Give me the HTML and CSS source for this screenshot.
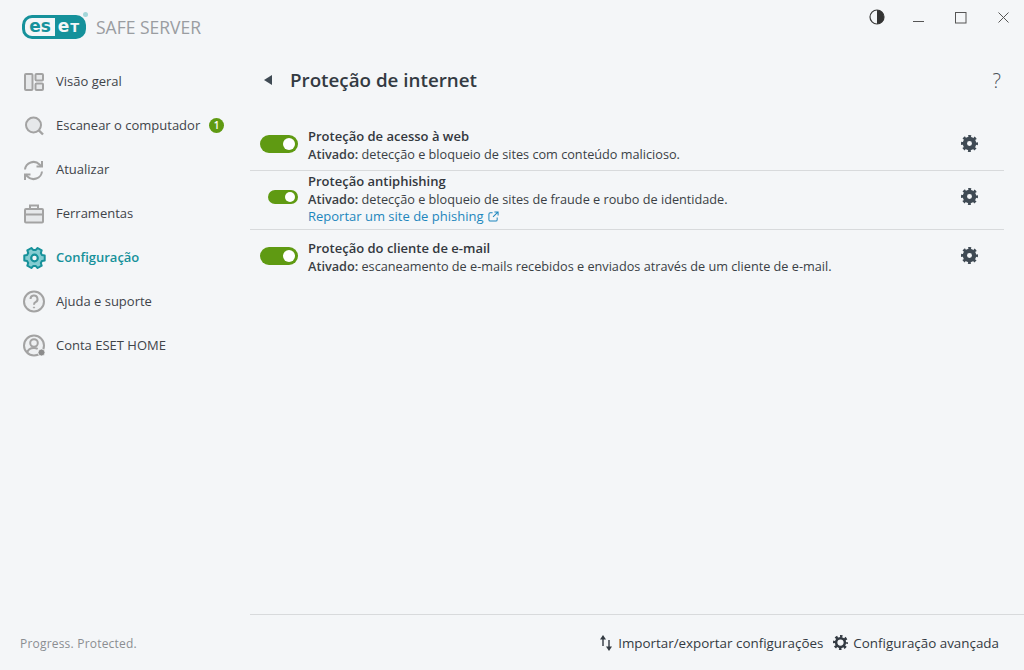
FILE: index.html

```html
<!DOCTYPE html>
<html lang="pt-BR">
<head>
<meta charset="UTF-8">
<title>ESET Safe Server</title>
<link rel="stylesheet" href="styles.css">
</head>
<body>
<svg class="defs" width="0" height="0">
  <symbol id="cog" viewBox="0 0 24 24">
    <circle cx="12" cy="12" r="6.5" fill="none" stroke="#3f4a54" stroke-width="6"/>
    <circle cx="12" cy="12" r="10" fill="none" stroke="#3f4a54" stroke-width="4" stroke-dasharray="3.93 3.92" stroke-dashoffset="1.96"/>
  </symbol>
  <symbol id="cog-line" viewBox="0 0 24 24">
    <circle cx="12" cy="12" r="7" fill="none" stroke="#333a42" stroke-width="4"/>
    <circle cx="12" cy="12" r="10" fill="none" stroke="#333a42" stroke-width="4" stroke-dasharray="3.93 3.92" stroke-dashoffset="1.96"/>
  </symbol>
</svg>
<div class="app">
  <aside class="sidebar">
    <div class="brand">
      <div class="logo"><span class="logo-es">es</span><span class="logo-et">e<small>T</small></span><i class="logo-reg"></i></div>
      <span class="product">SAFE SERVER</span>
    </div>
    <nav class="nav">
      <a class="nav-item">
        <svg class="nav-icon" viewBox="0 0 24 24" fill="#e6e8ea" stroke="#a3a3a3" stroke-width="2"><rect x="3" y="4" width="7.5" height="16" rx="1"/><rect x="13.5" y="4" width="7.5" height="6.5" rx="1"/><rect x="13.5" y="13.5" width="7.5" height="6.5" rx="1"/></svg>
        <span>Visão geral</span>
      </a>
      <a class="nav-item">
        <svg class="nav-icon" viewBox="0 0 24 24" fill="#e6e8ea" stroke="#a3a3a3" stroke-width="2"><circle cx="11.5" cy="11" r="7.5"/><path d="M16.8 16.3l4.200 4.200" stroke-width="2.4"/></svg>
        <span>Escanear o computador</span>
        <b class="badge">1</b>
      </a>
      <a class="nav-item">
        <svg class="nav-icon" viewBox="0 0 24 24" fill="none" stroke="#a3a3a3" stroke-width="2"><path d="M3 11.5A8.5 8.5 0 0 1 17.5 6.5L19.5 8.5"/><path d="M20 3V8.5H14.5"/><path d="M20 13.5A8.5 8.5 0 0 1 5.5 18.5L3.5 16.5"/><path d="M3 22V16.5H8.5"/></svg>
        <span>Atualizar</span>
      </a>
      <a class="nav-item">
        <svg class="nav-icon" viewBox="0 0 24 24" fill="#e6e8ea" stroke="#a3a3a3" stroke-width="2"><rect x="3" y="7" width="18" height="13.5" rx="1"/><path d="M8 7V3.5h8V7" fill="none"/><path d="M3 12.5h18"/></svg>
        <span>Ferramentas</span>
      </a>
      <a class="nav-item active">
        <svg class="nav-icon" viewBox="0 0 24 24" fill="#84ccd1" stroke="#16919a" stroke-width="2"><path d="M19.900 9L22.700 9.600V14.400L19.900 15L18.800 16.900L19.700 19.700L15.600 22L13.600 19.900H11.400L9.400 22L5.300 19.700L6.200 16.900L5.100 15L2.300 14.400V9.600L5.100 9L6.200 7.100L5.300 4.300L9.400 2L11.400 4.100H13.600L15.600 2L19.700 4.300L18.800 7.100z" stroke-linejoin="round"/><circle cx="12.5" cy="12" r="3.3" fill="#f4f6f8" stroke-width="2.2"/></svg>
        <span>Configuração</span>
      </a>
      <a class="nav-item">
        <svg class="nav-icon" viewBox="0 0 24 24" fill="#eef0f2" stroke="#a3a3a3" stroke-width="2"><circle cx="12" cy="11.5" r="10"/><path d="M8.5 9A3.5 3.5 0 1 1 13.5 12.200C12.500 12.700 12 13.400 12 14.700" fill="none"/><circle cx="12" cy="17.5" r=".6" fill="#a3a3a3" stroke-width="1"/></svg>
        <span>Ajuda e suporte</span>
      </a>
      <a class="nav-item">
        <svg class="nav-icon" viewBox="0 0 24 24" fill="#eef0f2" stroke="#a3a3a3" stroke-width="2"><circle cx="12" cy="11.5" r="10"/><circle cx="12" cy="9" r="3.8"/><path d="M5 19c.8-3.500 3.500-5 7-5 1.500 0 2.700.3 3.700.8" fill="none"/><circle cx="19.5" cy="18.5" r="3.5" fill="#8c8c8c" stroke="#f4f6f8" stroke-width=".8"/></svg>
        <span>Conta ESET HOME</span>
      </a>
    </nav>
    <div class="tagline">Progress. Protected.</div>
  </aside>

  <main class="main">
    <div class="window-bar">
      <svg class="win-icon contrast" viewBox="0 0 16 16"><circle cx="8" cy="8" r="7" fill="none" stroke="#3a3a3a" stroke-width="1.2"/><path d="M8 1a7 7 0 0 1 0 14z" fill="#333"/></svg>
      <svg class="win-icon minimize" viewBox="0 0 12 12"><path d="M0 9.500h11" stroke="#555" stroke-width="1"/></svg>
      <svg class="win-icon maximize" viewBox="0 0 12 12"><rect x=".5" y=".5" width="10.5" height="10.5" fill="none" stroke="#555" stroke-width="1"/></svg>
      <svg class="win-icon close" viewBox="0 0 12 12"><path d="M.5 .5l10 10M10.500 .5L.5 10.500" stroke="#555" stroke-width="1" fill="none"/></svg>
    </div>
    <header class="page-head">
      <span class="back"></span>
      <h1>Proteção de internet</h1>
      <span class="help">?</span>
    </header>
    <section class="rows">
      <div class="row">
        <span class="switch"></span>
        <div class="row-text">
          <div class="row-title">Proteção de acesso à web</div>
          <div class="row-desc"><b>Ativado:</b> detecção e bloqueio de sites com conteúdo malicioso.</div>
        </div>
        <svg class="gear" viewBox="0 0 24 24"><use href="#cog"/></svg>
      </div>
      <div class="row row-tall">
        <span class="switch small"></span>
        <div class="row-text">
          <div class="row-title">Proteção antiphishing</div>
          <div class="row-desc"><b>Ativado:</b> detecção e bloqueio de sites de fraude e roubo de identidade.</div>
          <a class="row-link">Reportar um site de phishing
            <svg class="ext" viewBox="0 0 12 12" fill="none" stroke="#1d86bd" stroke-width="1.1"><path d="M5 2H2.500A1.500 1.500 0 0 0 1 3.500v6A1.500 1.500 0 0 0 2.500 11h6A1.500 1.500 0 0 0 10 9.500V7"/><path d="M7 1h4v4M11 1L5.500 6.500"/></svg>
          </a>
        </div>
        <svg class="gear" viewBox="0 0 24 24"><use href="#cog"/></svg>
      </div>
      <div class="row row-last">
        <span class="switch"></span>
        <div class="row-text">
          <div class="row-title">Proteção do cliente de e-mail</div>
          <div class="row-desc"><b>Ativado:</b> escaneamento de e-mails recebidos e enviados através de um cliente de e-mail.</div>
        </div>
        <svg class="gear" viewBox="0 0 24 24"><use href="#cog"/></svg>
      </div>
    </section>
    <footer class="actions">
      <a class="action">
        <svg class="arrows" viewBox="0 0 12 16" fill="#333a42"><path d="M3 4v7" stroke="#333a42" stroke-width="1.4"/><path d="M3 0L6 4.500H0z"/><path d="M9 5v7" stroke="#333a42" stroke-width="1.4"/><path d="M9 16L6 11.500H12z"/></svg>
        Importar/exportar configurações
      </a>
      <a class="action">
        <svg class="action-gear" viewBox="0 0 24 24"><use href="#cog-line"/></svg>
        Configuração avançada
      </a>
    </footer>
  </main>
</div>
</body>
</html>
```

FILE: styles.css

```css
* {
    box-sizing: border-box;
}

html, body {
    margin: 0;
    height: 100%;
}

body {
    font-family: "Open Sans", "Noto Sans", sans-serif;
    font-size: 13px;
    color: #3a3f45;
    background-color: #f4f6f8;
}

.defs {
    display: block;
    height: 0;
}

.app {
    display: flex;
    height: 670px;
    overflow: hidden;
}

/* left column */
.sidebar {
    width: 250px;
    flex: none;
    display: flex;
    flex-direction: column;
    padding-left: 22px;
}

.brand {
    height: 59px;
    padding-top: 15px;
    display: flex;
    align-items: flex-start;
}

.logo {
    position: relative;
    width: 64px;
    height: 24px;
    display: flex;
    border: 3px solid #15919b;
    border-radius: 10px;
    background-color: #15919b;
    font-family: "DejaVu Sans", sans-serif;
    font-weight: 700;
    font-size: 17px;
    line-height: 17px;
}

.logo-es {
    width: 30px;
    background-color: #f4f6f8;
    color: #15919b;
    border-radius: 7px 0 0 7px;
    text-align: center;
}

.logo-et {
    flex: 1;
    color: #f4f6f8;
    text-align: center;
    letter-spacing: 1px;
}

.logo-et small {
    font-size: 13px;
}

.logo-reg {
    position: absolute;
    top: -6px;
    right: -5px;
    width: 5px;
    height: 5px;
    border-radius: 50%;
    background-color: #a3d6d9;
}

.product {
    margin-left: 10px;
    font-size: 17.5px;
    line-height: 24px;
    color: #9a9da1;
}

.nav {
    display: flex;
    flex-direction: column;
}

.nav-item {
    height: 44px;
    display: flex;
    align-items: center;
    font-size: 13px;
    color: #3f444a;
}

.nav-item.active {
    color: #16919a;
    font-weight: 600;
}

.nav-icon {
    width: 24px;
    height: 24px;
    margin-top: 2px;
    margin-right: 10px;
    flex: none;
}

.badge {
    width: 15px;
    height: 15px;
    margin-left: 9px;
    border-radius: 50%;
    background-color: #5f9a12;
    color: #fff;
    font-size: 10px;
    font-weight: 600;
    line-height: 15px;
    text-align: center;
}

.tagline {
    margin: auto 0 18px -2px;
    font-size: 12px;
    line-height: 16px;
    letter-spacing: 0.2px;
    color: #8b8e92;
}

/* right column */
.main {
    flex: 1;
    display: flex;
    flex-direction: column;
}

.window-bar {
    height: 58px;
    padding-top: 9px;
    display: flex;
    align-items: flex-start;
}

.win-icon {
    display: block;
}

.contrast {
    width: 16px;
    height: 16px;
    margin-left: 619px;
}

.minimize {
    width: 12px;
    height: 12px;
    margin: 3px 0 0 28px;
}

.maximize {
    width: 12px;
    height: 12px;
    margin: 3px 0 0 30px;
}

.close {
    width: 12px;
    height: 12px;
    margin: 3px 0 0 31px;
}

.page-head {
    height: 44px;
    display: flex;
    align-items: center;
    padding-left: 14px;
    padding-right: 23px;
}

.back {
    width: 0;
    height: 0;
    border-top: 5px solid transparent;
    border-bottom: 5px solid transparent;
    border-right: 8px solid #3f4a54;
    margin-right: 18px;
}

.page-head h1 {
    margin: 0;
    flex: 1;
    font-size: 18.8px;
    font-weight: 600;
    color: #333a42;
}

.help {
    font-size: 20px;
    font-weight: 300;
    color: #4a5058;
}

.rows {
    margin-top: 16px;
    margin-right: 20px;
    flex: 1;
}

.row {
    height: 53px;
    padding-top: 2px;
    display: flex;
    align-items: center;
    border-bottom: 1px solid #d8dadc;
}

.row-tall {
    height: 59px;
    padding-top: 0;
}

.row-last {
    height: 54px;
    padding-top: 0;
    border-bottom: none;
}

.switch {
    position: relative;
    width: 38px;
    height: 18px;
    flex: none;
    margin: 0 10px 2px;
    border-radius: 9px;
    background-color: #5f9a12;
}

.switch::after {
    content: "";
    position: absolute;
    right: 3px;
    top: 3px;
    width: 12px;
    height: 12px;
    border-radius: 50%;
    background-color: #fff;
}

.switch.small {
    width: 30px;
    height: 14px;
    margin-left: 18px;
    margin-bottom: 6px;
}

.switch.small::after {
    top: 2px;
    width: 10px;
    height: 10px;
}

.row-text {
    flex: 1;
    font-size: 12.7px;
    line-height: 18px;
}

.row-tall .row-text {
    margin-bottom: 3px;
}

.row-title {
    font-size: 13px;
    font-weight: 600;
    color: #33383e;
}

.row-desc b {
    font-weight: 600;
}

.row-link {
    margin-top: -1px;
    font-size: 13px;
    color: #1d86bd;
    display: flex;
    align-items: center;
}

.ext {
    width: 11px;
    height: 11px;
    margin-left: 5px;
}

.gear {
    width: 17px;
    height: 17px;
    flex: none;
    margin-right: 26px;
    margin-bottom: 3px;
}

.row-tall .gear {
    margin-bottom: 7px;
}

.row-last .gear {
    margin-bottom: 4px;
}

.actions {
    height: 56px;
    border-top: 1px solid #d8dadc;
    display: flex;
    justify-content: flex-end;
    align-items: center;
    padding-right: 25px;
    gap: 10px;
    font-size: 13.4px;
    font-weight: 500;
    color: #333a42;
}

.action {
    display: flex;
    align-items: center;
    gap: 6px;
}

.arrows {
    width: 12px;
    height: 16px;
}

.action-gear {
    width: 15px;
    height: 15px;
    margin-right: -1px;
}
```
